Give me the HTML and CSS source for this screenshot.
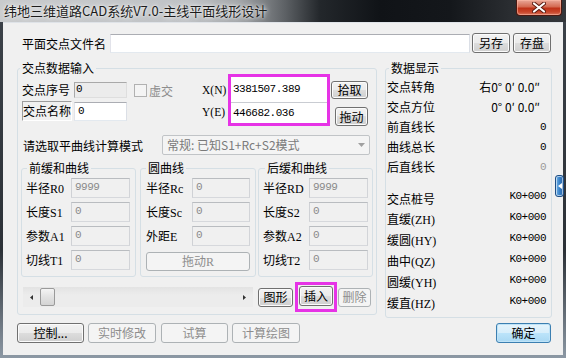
FILE: index.html
```html
<!DOCTYPE html>
<html lang="zh-CN">
<head>
<meta charset="utf-8">
<title>纬地三维道路CAD系统V7.0-主线平面线形设计</title>
<link rel="stylesheet" href="styles.css">
</head>
<body>
<div class="window">
  <div class="titlebar">
    <span class="title">纬地三维道路CAD系统V7.0-主线平面线形设计</span>
    <div class="close">
      <svg width="14" height="11" viewBox="0 0 14 11"><path d="M2 1.5 L12 9.5 M12 1.5 L2 9.5" stroke="#5a1a10" stroke-width="4" stroke-linecap="round"/><path d="M2 1.5 L12 9.5 M12 1.5 L2 9.5" stroke="#ffffff" stroke-width="2.2" stroke-linecap="round"/></svg>
    </div>
  </div>
  <div class="client">
    <div class="filerow">
      <span class="lbl file-lbl">平面交点文件名</span>
      <div class="tb file-tb"></div>
      <button class="btn save-btn">另存</button>
      <button class="btn disk-btn">存盘</button>
    </div>

    <div class="main">
      <fieldset class="grp g-input">
        <legend class="leg leg-input">交点数据输入</legend>

        <div class="pt-grid">
          <span class="lbl lbl-no">交点序号</span>
          <div class="ro-box">0</div>
          <div class="chk-wrap"><span class="chk"></span><span class="dis-text">虚交</span></div>
          <span class="lbl xy-lbl lbl-x"><span class="a">X(N)</span></span>
          <div class="magenta xy-box">
            <div class="tb xin"><span class="mono">3381507.389</span></div>
            <div class="tb yin"><span class="mono">446682.036</span></div>
          </div>
          <button class="btn pick-btn">拾取</button>

          <span class="lbl framed">交点名称</span>
          <div class="tb name-tb">0</div>
          <span class="lbl xy-lbl lbl-y"><span class="a">Y(E)</span></span>
          <button class="btn drag-btn">拖动</button>
        </div>

        <div class="mode-row">
          <span class="lbl mode-lbl">请选取平曲线计算模式</span>
          <div class="combo">
            <span>常规: 已知S1+Rc+S2模式</span>
            <svg class="combo-arrow" width="7" height="4" viewBox="0 0 7 4"><path d="M0 0 H7 L3.5 4 Z" fill="#a0a0a0"/></svg>
          </div>
        </div>

        <div class="sub-row">
          <fieldset class="grp sub sub1">
            <legend class="leg leg-s1">前缓和曲线</legend>
            <div class="rows">
              <div class="frow"><span class="lbl fl">半径<span class="a">R0</span></span><div class="tb dis fin">9999</div></div>
              <div class="frow"><span class="lbl fl">长度<span class="a">S1</span></span><div class="tb dis fin">0</div></div>
              <div class="frow"><span class="lbl fl">参数<span class="a">A1</span></span><div class="tb dis fin">0</div></div>
              <div class="frow"><span class="lbl fl">切线<span class="a">T1</span></span><div class="tb dis fin">0</div></div>
            </div>
          </fieldset>
          <fieldset class="grp sub sub2">
            <legend class="leg leg-s2">圆曲线</legend>
            <div class="rows">
              <div class="frow"><span class="lbl fl2">半径<span class="a">Rc</span></span><div class="tb dis fin2">0</div></div>
              <div class="frow"><span class="lbl fl2">长度<span class="a">Sc</span></span><div class="tb dis fin2">0</div></div>
              <div class="frow"><span class="lbl fl2">外距<span class="a">E</span></span><div class="tb dis fin2">0</div></div>
              <div class="frow"><button class="btn disabled dragr-btn">拖动<span class="a">R</span></button></div>
            </div>
          </fieldset>
          <fieldset class="grp sub sub3">
            <legend class="leg leg-s3">后缓和曲线</legend>
            <div class="rows">
              <div class="frow"><span class="lbl fl">半径<span class="a">RD</span></span><div class="tb dis fin">9999</div></div>
              <div class="frow"><span class="lbl fl">长度<span class="a">S2</span></span><div class="tb dis fin">0</div></div>
              <div class="frow"><span class="lbl fl">参数<span class="a">A2</span></span><div class="tb dis fin">0</div></div>
              <div class="frow"><span class="lbl fl">切线<span class="a">T2</span></span><div class="tb dis fin">0</div></div>
            </div>
          </fieldset>
        </div>

        <div class="scroll-row">
          <div class="hscroll">
            <div class="sarrow"><svg width="3" height="5" viewBox="0 0 3 5"><path d="M3 0 V5 L0 2.5 Z" fill="#333"/></svg></div>
            <div class="thumb"></div>
            <div class="strack"></div>
            <div class="sarrow"><svg width="3" height="5" viewBox="0 0 3 5"><path d="M0 0 V5 L3 2.5 Z" fill="#333"/></svg></div>
          </div>
          <button class="btn graph-btn">图形</button>
          <div class="magenta ins-box"><button class="btn ins-btn">插入</button></div>
          <button class="btn disabled del-btn">删除</button>
        </div>
      </fieldset>

      <fieldset class="grp g-show">
        <legend class="leg leg-show">数据显示</legend>
        <div class="show-rows">
          <div class="srow"><span>交点转角</span><span class="ang">右0° 0′ 0.0″</span></div>
          <div class="srow"><span>交点方位</span><span class="ang">0° 0′ 0.0″</span></div>
          <div class="srow"><span>前直线长</span><span class="mono">0</span></div>
          <div class="srow"><span>曲线总长</span><span class="mono">0</span></div>
          <div class="srow"><span>后直线长</span><span class="mono grayv">0</span></div>
        </div>
        <div class="show-rows2">
          <div class="srow2"><span>交点桩号</span><span class="mono kv">K0+000</span></div>
          <div class="srow2"><span>直缓<span class="a">(ZH)</span></span><span class="mono kv">K0+000</span></div>
          <div class="srow2"><span>缓圆<span class="a">(HY)</span></span><span class="mono kv">K0+000</span></div>
          <div class="srow2"><span>曲中<span class="a">(QZ)</span></span><span class="mono kv">K0+000</span></div>
          <div class="srow2"><span>圆缓<span class="a">(YH)</span></span><span class="mono kv">K0+000</span></div>
          <div class="srow2"><span>缓直<span class="a">(HZ)</span></span><span class="mono kv">K0+000</span></div>
        </div>
      </fieldset>
    </div>

    <div class="bottom-row">
      <button class="btn ctrl-btn">控制...</button>
      <button class="btn disabled wide-btn">实时修改</button>
      <button class="btn disabled try-btn">试算</button>
      <button class="btn disabled wide-btn">计算绘图</button>
      <button class="btn default ok-btn">确定</button>
    </div>

    <div class="side-tab">
      <svg width="4" height="6" viewBox="0 0 4 6"><path d="M4 0 V6 L0 3 Z" fill="#ffffff"/></svg>
    </div>
  </div>
</div>
</body>
</html>
```

FILE: styles.css
```css
* { box-sizing: border-box; }

html, body {
  margin: 0;
  padding: 0;
}

body {
  width: 566px;
  height: 358px;
  overflow: hidden;
  font-family: "Noto Sans CJK SC", "Noto Sans", sans-serif;
  font-size: 12px;
  color: #000;
  background: #3d434a;
}

.window {
  width: 566px;
  height: 358px;
  display: flex;
  flex-direction: column;
  background: linear-gradient(180deg, #3d434a 0%, #2c3137 70%, #8c98a4 100%);
}

.titlebar {
  height: 22px;
  display: flex;
  align-items: flex-start;
  justify-content: space-between;
  background: linear-gradient(90deg, #c9cbcd 0px, #bfc2c5 190px, #a2a5a8 240px, #5d6165 285px, #23272b 320px, #101317 380px, #14171b 450px, #2a2d31 510px, #34373b 566px);
}

.title {
  padding-left: 4px;
  line-height: 22px;
  font-size: 13px;
  color: #1c1c1c;
  text-shadow: 0 0 6px #f4f4f4, 0 0 3px #ffffff;
  white-space: nowrap;
}

.close {
  width: 46px;
  height: 16px;
  margin-right: 4px;
  border: 1px solid #4b1810;
  border-top: none;
  border-radius: 0 0 4px 4px;
  background: linear-gradient(180deg, #e9a899 0%, #d46a52 45%, #bf3218 55%, #c9462b 80%, #d9765e 100%);
  box-shadow: inset 0 0 0 1px rgba(255, 190, 170, 0.55);
  display: flex;
  align-items: center;
  justify-content: center;
}

.client {
  position: relative;
  margin: 0 3px;
  height: 333px;
  background: #f0f0f0;
  border-top: 1px solid #dfe3e8;
}

.lbl {
  white-space: nowrap;
}

.a {
  font-family: "Liberation Serif", serif;
  font-size: 12px;
}

.mono {
  font-family: "Liberation Mono", monospace;
  font-size: 11px;
  letter-spacing: -0.5px;
}

/* textboxes */
.tb {
  background: #fff;
  border: 1px solid;
  border-color: #abadb3 #dbdfe6 #e3e9ef #e2e3ea;
  padding-left: 3px;
}

.tb.dis {
  background: #f0f0f0;
  border-color: #b9bcc0 #d2d4d8 #d6d8dc #cfd1d5;
  color: #8a8a8a;
  font-family: "Liberation Mono", monospace;
  font-size: 11px;
  letter-spacing: -0.5px;
  line-height: 16px;
}

/* buttons */
.btn {
  font: inherit;
  color: #000;
  padding: 0;
  border: 1px solid #707070;
  border-radius: 3px;
  background: linear-gradient(180deg, #f2f2f2 0%, #ebebeb 50%, #dddddd 50%, #cfcfcf 100%);
  box-shadow: inset 0 0 0 1px #fbfbfb;
  line-height: 16px;
  white-space: nowrap;
}

.btn.disabled {
  border-color: #adb2b5;
  background: #f4f4f4;
  color: #8d8d8d;
  box-shadow: none;
}

.btn.default {
  border-color: #3c7fb1;
  background: linear-gradient(180deg, #e5f4fc 0%, #d7eefb 50%, #bce4fa 50%, #a9d8f3 100%);
  box-shadow: inset 0 0 0 1px #bfe3f7;
}

/* file row */
.filerow {
  display: flex;
  align-items: center;
  height: 20px;
  margin: 10px 0 0 19px;
}

.file-lbl { width: 88px; }

.file-tb {
  width: 360px;
  height: 19px;
}

.save-btn {
  width: 38px;
  height: 20px;
  margin-left: 2px;
}

.disk-btn {
  width: 38px;
  height: 20px;
  margin-left: 3px;
}

/* main groups */
.main {
  display: flex;
  align-items: flex-start;
  margin: 8px 0 0 14px;
}

.grp {
  margin: 0;
  padding: 0;
  min-width: 0;
  border: 1px solid #d5dfe5;
  border-radius: 3px;
}

.leg {
  padding: 0 2px;
  line-height: 14px;
  height: 14px;
  white-space: nowrap;
}

.g-input { width: 360px; }
.leg-input { margin-left: 2px; }

.g-show {
  width: 167px;
  margin-left: 8px;
}
.leg-show { margin-left: 3px; }

/* point grid */
.pt-grid {
  display: grid;
  grid-template-columns: 52px 53px 75px 26px 102px 40px;
  grid-template-rows: 26px 26px;
  margin: -1px 0 0 4px;
}

.lbl-no {
  grid-column: 1;
  grid-row: 1;
  align-self: end;
  margin-bottom: 2px;
  line-height: 16px;
}

.ro-box {
  grid-column: 2;
  grid-row: 1;
  align-self: end;
  margin-bottom: 2px;
  height: 16px;
  border: 1px solid;
  border-color: #a9a9a9 #dedede #dedede #a9a9a9;
  background: #ececec;
  font-family: "Liberation Mono", monospace;
  font-size: 11px;
  line-height: 12px;
  padding-left: 1px;
}

.chk-wrap {
  grid-column: 3;
  grid-row: 1;
  align-self: end;
  margin-bottom: 2px;
  height: 16px;
  display: flex;
  align-items: center;
  padding-left: 7px;
}

.chk {
  width: 13px;
  height: 13px;
  border: 1px solid #b1b1b1;
  background: #f4f4f4;
  margin-right: 2px;
}

.dis-text { color: #8d8d8d; }

.xy-lbl {
  grid-column: 4;
  line-height: 16px;
  height: 16px;
}
.xy-lbl .a { font-size: 11.5px; }

.lbl-x {
  grid-row: 1;
  align-self: end;
  margin-bottom: 3px;
}

.lbl-y {
  grid-row: 2;
  align-self: start;
  margin-top: 3px;
}

.magenta {
  border: 3px solid #e633e6;
}

.xy-box {
  grid-column: 5;
  grid-row: 1 / 3;
  display: flex;
  flex-direction: column;
  background: #fff;
}

.xin {
  height: 25px;
  border: none;
  padding: 0 0 2px 2px;
  display: flex;
  align-items: center;
}

.yin {
  height: 21px;
  border: none;
  border-top: 1px solid #c9ccd2;
  padding: 0 0 0 2px;
  display: flex;
  align-items: center;
}

.pick-btn {
  grid-column: 6;
  grid-row: 1;
  align-self: start;
  margin: 7px 0 0 1px;
  width: 37px;
  height: 18px;
}

.framed {
  grid-column: 1;
  grid-row: 2;
  align-self: start;
  margin-top: 1px;
  width: 50px;
  height: 20px;
  line-height: 17px;
  border: 1px solid;
  border-color: #9d9d9d #ffffff #ffffff #9d9d9d;
}

.name-tb {
  grid-column: 2;
  grid-row: 2;
  align-self: start;
  margin-top: 2px;
  height: 19px;
  font-family: "Liberation Mono", monospace;
  font-size: 11px;
  line-height: 17px;
}

.drag-btn {
  grid-column: 6;
  grid-row: 2;
  align-self: start;
  margin: 7px 0 0 5px;
  width: 33px;
  height: 19px;
}

/* mode row */
.mode-row {
  display: flex;
  align-items: center;
  margin: 9px 0 0 5px;
  height: 20px;
}

.mode-lbl { width: 139px; }

.combo {
  width: 208px;
  height: 20px;
  border: 1px solid #c1c4c7;
  border-radius: 2px;
  background: #f4f4f4;
  color: #7a7a7a;
  display: flex;
  align-items: center;
  justify-content: space-between;
  padding: 0 4px 0 4px;
  line-height: 16px;
}

/* sub groups */
.sub-row {
  display: flex;
  margin: 6px 0 0 3px;
}

.sub1 { width: 115px; }
.sub2 { width: 116px; margin-left: 4px; }
.sub3 { width: 115px; margin-left: 2px; }

.leg-s1 { margin-left: 5px; }
.leg-s2 { margin-left: 5px; }
.leg-s3 { margin-left: 6px; }

.rows {
  display: flex;
  flex-direction: column;
  gap: 4px;
  padding: 3px 0 6px 0;
}

.sub1 .rows, .sub3 .rows { padding-left: 4px; }
.sub2 .rows { padding-left: 5px; }

.frow {
  display: flex;
  align-items: center;
  height: 20px;
}

.fl { width: 45px; }
.sub3 .fl { width: 46px; }
.fin { width: 59px; height: 20px; }

.fl2 { width: 46px; }
.fin2 { width: 58px; height: 20px; }

.dragr-btn {
  width: 104px;
  height: 19px;
  margin-top: 3px;
}

/* scroll row */
.scroll-row {
  display: flex;
  align-items: center;
  height: 30px;
  margin: 5px 0 2px 5px;
}

.hscroll {
  width: 230px;
  height: 20px;
  display: flex;
  align-items: stretch;
  background: linear-gradient(180deg, #e3e3e3 0%, #ececec 40%, #ececec 100%);
}

.sarrow {
  width: 17px;
  display: flex;
  align-items: center;
  justify-content: center;
}

.thumb {
  width: 15px;
  margin: 1px 0;
  border: 1px solid #9a9a9a;
  border-radius: 2px;
  background: linear-gradient(180deg, #f4f4f4 0%, #e2e2e2 50%, #d4d4d4 100%);
}

.strack { flex: 1; }

.graph-btn {
  width: 35px;
  height: 19px;
  margin-left: 5px;
}

.ins-box {
  width: 42px;
  height: 30px;
  margin-left: 2px;
  display: flex;
  align-items: flex-start;
  justify-content: center;
}

.ins-btn {
  width: 34px;
  height: 20px;
  margin-top: 1px;
}

.del-btn {
  width: 33px;
  height: 19px;
  margin-left: 1px;
}

/* data display */
.show-rows {
  padding: 2px 5px 0 1px;
}

.srow {
  height: 20px;
  display: flex;
  align-items: center;
  justify-content: space-between;
  line-height: 16px;
}

.ang {
  margin-right: 6px;
}

.grayv { color: #9a9a9a; }

.show-rows2 {
  padding: 11px 5px 3px 1px;
}

.srow2 {
  height: 21px;
  display: flex;
  align-items: center;
  justify-content: space-between;
  line-height: 16px;
}

.kv {
  position: relative;
  top: -3px;
}

/* bottom buttons */
.bottom-row {
  display: flex;
  align-items: center;
  margin: 5px 12px 0 14px;
}

.bottom-row .btn { height: 20px; }

.ctrl-btn { width: 67px; }
.wide-btn { width: 68px; margin-left: 4px; }
.try-btn { width: 67px; margin-left: 5px; }

.ok-btn {
  width: 55px;
  margin-left: auto;
}

/* collapse tab on the right edge, lies over the frame */
.side-tab {
  position: absolute;
  left: 552px;
  top: 152px;
  width: 9px;
  height: 22px;
  border: 1px solid #1f4f85;
  border-radius: 3px;
  background: linear-gradient(90deg, #6fb0e6 0%, #3a82c8 50%, #2a66aa 100%);
  box-shadow: inset 0 0 0 1px rgba(255, 255, 255, 0.55);
  display: flex;
  align-items: center;
  justify-content: center;
}
```
